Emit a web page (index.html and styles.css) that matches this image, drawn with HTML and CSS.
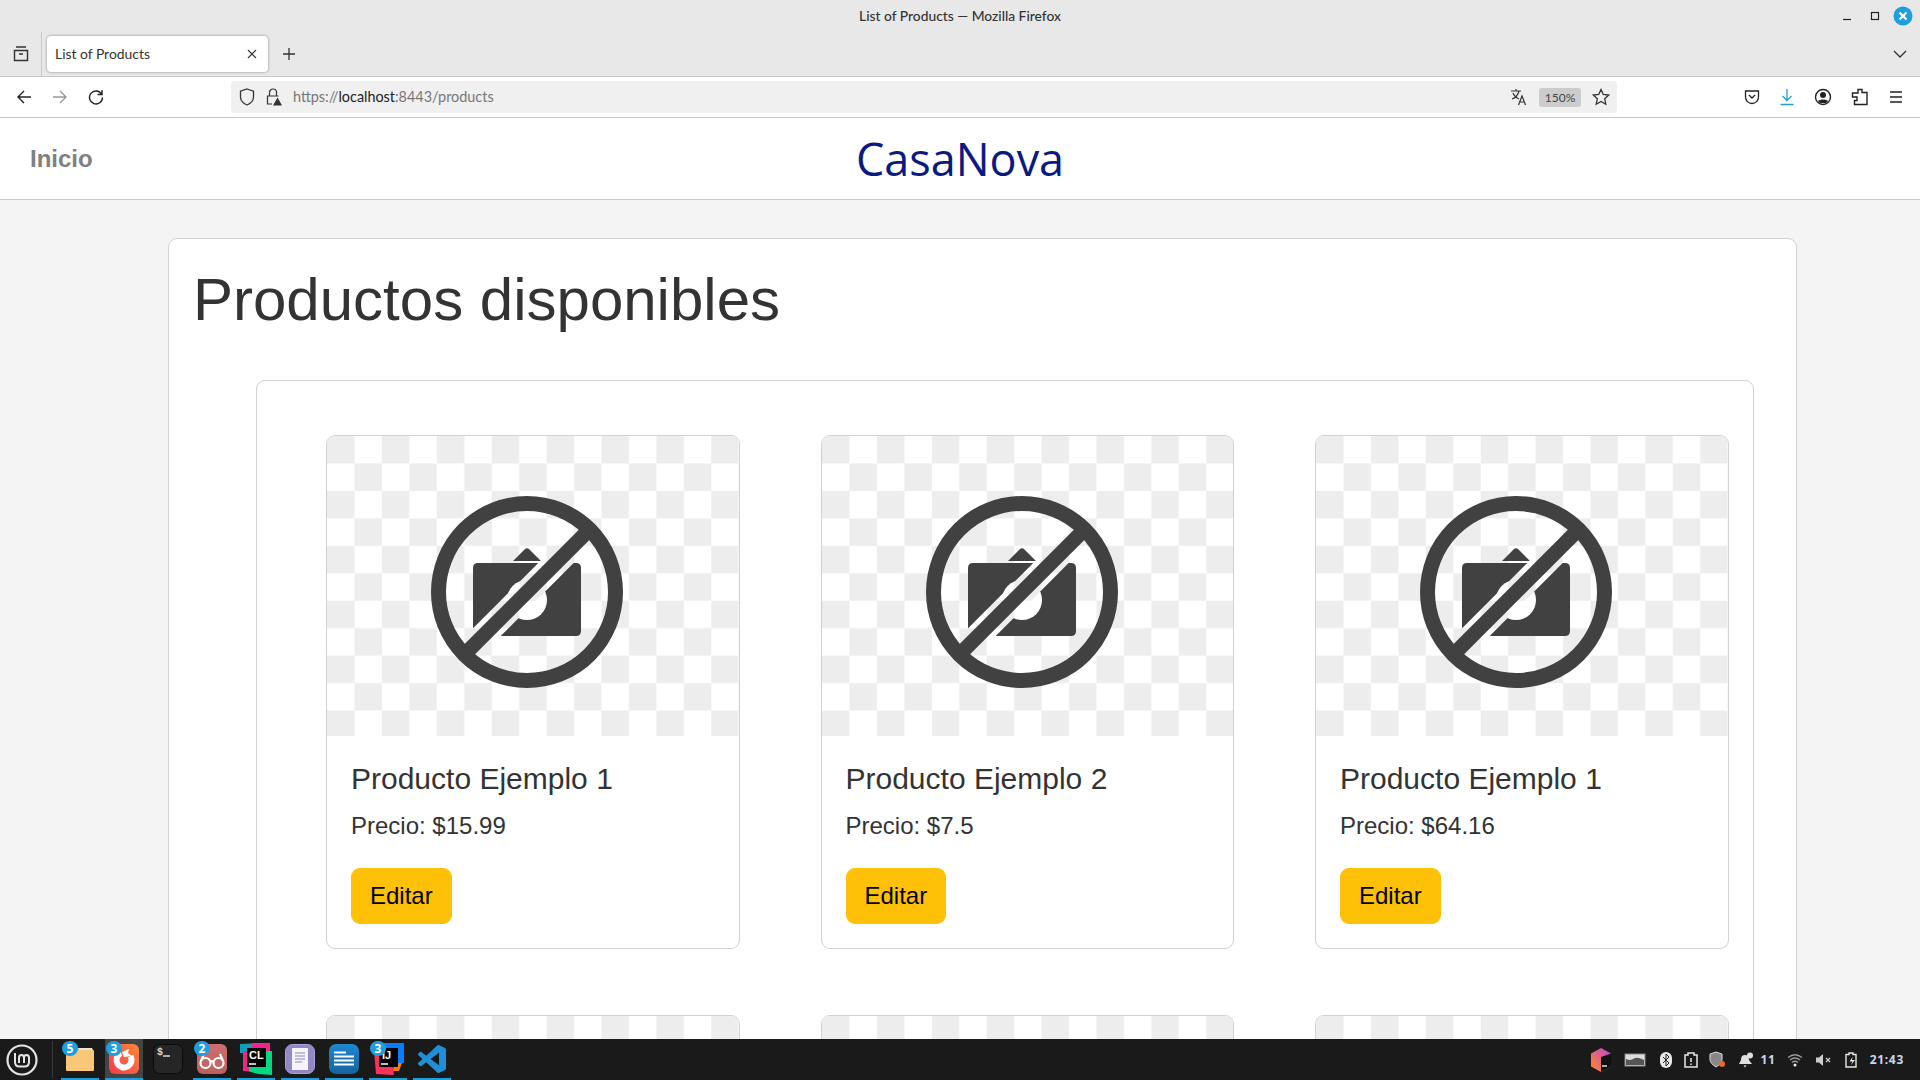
FILE: index.html
```html
<!DOCTYPE html>
<html>
<head>
    <title>List of Products</title>
    <link rel="stylesheet" href="styles.css">
</head>
<body>
    <svg class="defs" width="0" height="0">
        <defs>
            <pattern id="checker" width="54.9" height="54.9" patternUnits="userSpaceOnUse">
                <rect width="54.9" height="54.9" fill="#fff"/>
                <rect width="27.45" height="27.45" fill="#ededed"/>
                <rect x="27.45" y="27.45" width="27.45" height="27.45" fill="#ededed"/>
            </pattern>
            <mask id="cut" maskUnits="userSpaceOnUse" x="0" y="0" width="412" height="300">
                <rect width="412" height="300" fill="#fff"/>
                <line x1="130" y1="226" x2="270" y2="86" stroke="#000" stroke-width="25"/>
            </mask>
            <symbol id="noimage" viewBox="0 0 412 300">
                <rect width="412" height="300" fill="url(#checker)"/>
                <g mask="url(#cut)">
                    <path fill="#414141" d="M186 125l12-12q2-1.500 4 0l12 12zM151 127h98q5 0 5 5v63q0 5-5 5H151q-5 0-5-5v-63q0-5 5-5z"/>
                    <circle cx="200" cy="164" r="20" fill="#fff"/>
                </g>
                <circle cx="200" cy="156" r="88.500" fill="none" stroke="#414141" stroke-width="15"/>
                <line x1="137" y1="219" x2="263" y2="93" stroke="#414141" stroke-width="14.500"/>
            </symbol>
        </defs>
    </svg>

    <div class="browser">
        <div class="titlebar">
            <span class="window-title">List of Products — Mozilla Firefox</span>
            <div class="window-controls">
                <svg width="14" height="14" viewBox="0 0 14 14"><path d="M3 10.500h8" stroke="#222" stroke-width="1.200"/></svg>
                <svg width="14" height="14" viewBox="0 0 14 14"><rect x="3.500" y="3.500" width="7" height="7" fill="none" stroke="#222" stroke-width="1.200"/></svg>
                <svg width="22" height="22" viewBox="0 0 22 22"><circle cx="11" cy="11" r="9.500" fill="#1f9ede"/><path d="M7.500 7.500l7 7M14.500 7.500l-7 7" stroke="#fff" stroke-width="2.200"/></svg>
            </div>
        </div>
        <div class="tabbar">
            <span class="tab-slot">
                <svg width="18" height="18" viewBox="0 0 18 18" fill="none" stroke="#333" stroke-width="1.400"><path d="M4 2h10M2.500 5.500h13v10h-13zM7 9h4"/></svg>
            </span>
            <div class="tab">
                <span class="tab-title">List of Products</span>
                <svg width="12" height="12" viewBox="0 0 12 12"><path d="M2 2l8 8M10 2l-8 8" stroke="#333" stroke-width="1.100"/></svg>
            </div>
            <svg class="new-tab" width="14" height="14" viewBox="0 0 14 14"><path d="M7 1v12M1 7h12" stroke="#333" stroke-width="1.300"/></svg>
            <svg class="tab-list" width="16" height="16" viewBox="0 0 16 16"><path d="M2 5l6 6 6-6" fill="none" stroke="#333" stroke-width="1.300"/></svg>
        </div>
        <div class="navbar">
            <span class="nav-btn"><svg width="16" height="16" viewBox="0 0 16 16" fill="none" stroke="#222" stroke-width="1.400"><path d="M15 8H2M8 2L2 8l6 6"/></svg></span>
            <span class="nav-btn"><svg width="16" height="16" viewBox="0 0 16 16" fill="none" stroke="#999" stroke-width="1.400"><path d="M1 8h13M8 2l6 6-6 6"/></svg></span>
            <span class="nav-btn"><svg width="16" height="16" viewBox="0 0 16 16" fill="none" stroke="#222" stroke-width="1.400"><path d="M13.500 5A6.500 6.500 0 1 0 14.500 8.500M14 1v4.500H9.500"/></svg></span>
            <div class="urlbar">
                <svg class="url-shield" width="16" height="18" viewBox="0 0 16 18" fill="none" stroke="#333" stroke-width="1.300"><path d="M8 1l6.500 2.200v6C14.500 13 11 16 8 17 5 16 1.500 13 1.500 9.200v-6z"/></svg>
                <svg class="url-lock" width="16" height="18" viewBox="0 0 16 18"><path d="M3.500 8V4.500a3.500 3.500 0 0 1 7 0V8M6 16H1.500V8h11" fill="none" stroke="#333" stroke-width="1.200"/><path d="M11.500 9.500l4.500 8H7z" fill="#333"/></svg>
                <span class="url-text">https://<b>localhost</b>:8443/products</span>
                <svg class="url-translate" width="18" height="18" viewBox="0 0 18 18" fill="none" stroke="#333" stroke-width="1.200"><path d="M1 3h10M6 1v2M9 3c-1 4-4 7-7 8M3 5c1 3 4 5 6 6M8.500 17l3.500-9 3.500 9M10 14h4"/></svg>
                <span class="url-zoom">150%</span>
                <svg class="url-star" width="18" height="18" viewBox="0 0 18 18"><path d="M9 1.500l2.300 5 5.400.600-4 3.700 1.100 5.400L9 13.500l-4.800 2.700 1.100-5.400-4-3.700 5.400-.600z" fill="none" stroke="#333" stroke-width="1.300"/></svg>
            </div>
            <div class="toolbar">
                <svg width="16" height="16" viewBox="0 0 16 16" fill="none" stroke="#222" stroke-width="1.300"><path d="M1.500 2h13v6a6.500 6.500 0 0 1-13 0zM5 6l3 3 3-3"/></svg>
                <svg width="16" height="18" viewBox="0 0 16 18" fill="none" stroke="#1f9ede" stroke-width="1.300"><path d="M8 1v11M3.500 8L8 12.500 12.500 8M1.500 16.500h13"/></svg>
                <svg width="18" height="18" viewBox="0 0 18 18"><circle cx="9" cy="9" r="7.500" fill="none" stroke="#222" stroke-width="1.400"/><circle cx="9" cy="7" r="3" fill="#222"/><path d="M4 13c2-2 8-2 10 0l-2 2H6z" fill="#222"/></svg>
                <svg width="18" height="18" viewBox="0 0 18 18"><path d="M7 1.500h4v3h5v12H3.500v-4h2.500V9H1.500V5H7z" fill="none" stroke="#222" stroke-width="1.400"/></svg>
                <svg width="16" height="16" viewBox="0 0 16 16"><path d="M2 3h12M2 8h12M2 13h12" stroke="#222" stroke-width="1.300"/></svg>
            </div>
        </div>
    </div>

    <div class="page">
        <header class="site-header">
            <a class="home-link">Inicio</a>
            <span class="brand">CasaNova</span>
            <span></span>
        </header>
        <main class="panel">
            <h1>Productos disponibles</h1>
            <section class="product-box">
                <article class="card">
                    <svg class="card-img"><use href="#noimage"/></svg>
                    <div class="card-body">
                        <h5>Producto Ejemplo 1</h5>
                        <p>Precio: $15.99</p>
                        <a class="btn-edit">Editar</a>
                    </div>
                </article>
                <article class="card">
                    <svg class="card-img"><use href="#noimage"/></svg>
                    <div class="card-body">
                        <h5>Producto Ejemplo 2</h5>
                        <p>Precio: $7.5</p>
                        <a class="btn-edit">Editar</a>
                    </div>
                </article>
                <article class="card">
                    <svg class="card-img"><use href="#noimage"/></svg>
                    <div class="card-body">
                        <h5>Producto Ejemplo 1</h5>
                        <p>Precio: $64.16</p>
                        <a class="btn-edit">Editar</a>
                    </div>
                </article>
                <article class="card"><svg class="card-img"><use href="#noimage"/></svg></article>
                <article class="card"><svg class="card-img"><use href="#noimage"/></svg></article>
                <article class="card"><svg class="card-img"><use href="#noimage"/></svg></article>
            </section>
        </main>
    </div>

    <footer class="taskbar">
        <span class="menu-btn">
            <svg width="32" height="32" viewBox="0 0 32 32" fill="none" stroke="#e4e4e4"><circle cx="16" cy="16" r="14.500" stroke-width="2.200"/><path d="M9 9v9q0 4.500 4.500 4.500h5q4.500 0 4.500-4.500v-4q0-3-2.500-3t-2.500 3v5M18 14q0-3-2.500-3T13 14v5" stroke-width="2"/></svg>
        </span>
        <span class="task-sep"></span>
        <div class="task-items">
            <span class="task on">
                <i class="count">5</i>
                <svg width="30" height="26" viewBox="0 0 30 26"><path d="M1 3q0-1 1-1h10l2 2h14q1 0 1 1v19q0 1-1 1H2q-1 0-1-1z" fill="#f8c878"/><path d="M12 2h15l1 2H14z" fill="#e8e4d8"/></svg>
            </span>
            <span class="task on active">
                <i class="count">3</i>
                <svg width="30" height="30" viewBox="0 0 30 30"><defs><linearGradient id="fx" x1="0" y1="1" x2="1" y2="0"><stop offset="0" stop-color="#f5384f"/><stop offset="1" stop-color="#ff8a35"/></linearGradient></defs><rect width="30" height="30" rx="6" fill="url(#fx)"/><circle cx="15" cy="16" r="7.500" fill="none" stroke="#fff" stroke-width="6" stroke-dasharray="36 11" transform="rotate(-30 15 16)"/><path d="M13 8l7-3-1 4 4 3-8 1z" fill="#fff"/></svg>
            </span>
            <span class="task">
                <svg width="30" height="30" viewBox="0 0 30 30"><rect x=".5" y=".5" width="29" height="29" rx="6" fill="#262626" stroke="#0c0c0c"/><text x="4" y="11" class="term-text">$</text><path d="M10 12h7" stroke="#ddd" stroke-width="1.500"/></svg>
            </span>
            <span class="task on">
                <i class="count">2</i>
                <svg width="30" height="30" viewBox="0 0 30 30" fill="none" stroke="#fff" stroke-width="2.200"><defs><linearGradient id="gl" x1="0" y1="0" x2="0" y2="1"><stop offset="0" stop-color="#cf6e6e"/><stop offset="1" stop-color="#bb6060"/></linearGradient></defs><rect width="30" height="30" rx="6" fill="url(#gl)" stroke="none"/><circle cx="8.500" cy="19" r="5"/><circle cx="21.500" cy="19" r="5"/><path d="M13.500 18q1.500-1.500 3 0M4 17l3-7M26 17l-3-7"/></svg>
            </span>
            <span class="task on">
                <svg width="32" height="32" viewBox="0 0 32 32"><path d="M0 1l24-1 1 10H0z" fill="#0ea0b8"/><path d="M12 0h18v14H12z" fill="#f0258c"/><path d="M4 8h28v24l-14-1-14-4z" fill="#00d880"/><path d="M3 8h6v20H3z" fill="#f0258c"/><rect x="7" y="5" width="19" height="19" fill="#000"/><text x="9" y="16" class="ide-text">CL</text><path d="M9 21h7" stroke="#fff" stroke-width="1.500"/></svg>
            </span>
            <span class="task on">
                <svg width="30" height="30" viewBox="0 0 30 30"><rect x=".5" y=".5" width="29" height="29" rx="7" fill="#9188c6" stroke="#aaa3d8"/><rect x="7" y="4" width="16" height="22" fill="#f4f4fa"/><path d="M10 9h10M10 12h10M10 15h10M10 18h7" stroke="#8d86c4"/></svg>
            </span>
            <span class="task on">
                <svg width="30" height="30" viewBox="0 0 30 30"><defs><linearGradient id="wr" x1="0" y1="0" x2="0" y2="1"><stop offset="0" stop-color="#1e86d0"/><stop offset="1" stop-color="#14649c"/></linearGradient></defs><rect width="30" height="30" rx="7" fill="url(#wr)"/><path d="M5 8.500h12M5 12.500h20M5 16.500h20M5 20.500h20" stroke="#fff" stroke-width="1.900"/></svg>
            </span>
            <span class="task on">
                <i class="count">3</i>
                <svg width="32" height="32" viewBox="0 0 32 32"><path d="M10 0h22v20H10z" fill="#087cfa"/><path d="M2 7h16l4 25-18-1z" fill="#fe315d"/><path d="M22 20h8l-3 8h-6z" fill="#f97a12"/><rect x="7" y="5" width="19" height="19" fill="#000"/><text x="10" y="16" class="ide-text">IJ</text><path d="M9 21h7" stroke="#fff" stroke-width="1.500"/></svg>
            </span>
            <span class="task on">
                <svg width="28" height="28" viewBox="0 0 24 24"><path fill="#1f90d8" d="M23.150 2.587L18.210.21a1.494 1.494 0 0 0-1.705.29l-9.460 8.630-4.120-3.128a.999.999 0 0 0-1.276.057L.327 7.261A1 1 0 0 0 .326 8.740L3.899 12 .326 15.260a1 1 0 0 0 .001 1.479L1.650 17.940a.999.999 0 0 0 1.276.057l4.120-3.128 9.460 8.630a1.492 1.492 0 0 0 1.704.29l4.942-2.377A1.500 1.500 0 0 0 24 20.060V3.939a1.500 1.500 0 0 0-.85-1.352zm-5.146 14.861L10.826 12l7.178-5.448v10.896z"/></svg>
            </span>
        </div>
        <div class="tray">
            <svg class="tray-box" width="22" height="24" viewBox="0 0 22 24"><defs><linearGradient id="tb" x1="0" y1="1" x2="1" y2="0"><stop offset="0" stop-color="#ff8a1e"/><stop offset="1" stop-color="#c040e0"/></linearGradient></defs><path d="M11 0l10 5.500v13L11 24 1 18.500v-13z" fill="url(#tb)"/><path d="M11 9l10-3.500v13L11 24z" fill="#111"/><path d="M12 18h5" stroke="#fff" stroke-width="1.300"/></svg>
            <svg class="tray-disk" width="22" height="14" viewBox="0 0 22 14"><rect x="1" y="1" width="20" height="12" fill="#ddd" stroke="#888"/><path d="M2 6q4 2 7 0t6-1 5 2v5H2z" fill="#555"/></svg>
            <svg class="tray-bt" width="12" height="16" viewBox="0 0 12 16"><rect width="12" height="16" rx="6" fill="#e8e8e8"/><path d="M3 5l6 6-3 3V2l3 3-6 6" fill="none" stroke="#222"/></svg>
            <svg class="tray-clip" width="14" height="16" viewBox="0 0 14 16"><path d="M1 3h3V1h6v2h3v12H1zM7 6v4M7 11.500v1.500" fill="none" stroke="#e8e8e8" stroke-width="1.500"/></svg>
            <svg class="tray-shield" width="16" height="17" viewBox="0 0 16 17"><path d="M7 1l6 2v5c0 4-3 6-6 8-3-2-6-4-6-8V3z" fill="#888" stroke="#ddd"/><circle cx="13" cy="13" r="3" fill="#f0682a"/></svg>
            <svg class="tray-bell" width="16" height="16" viewBox="0 0 16 16"><path d="M7 3q4 0 4 5l3 4H1l2-4q0-5 4-5zM5.500 13.500h3L7 15.500z" fill="#e0e0e0"/><circle cx="12" cy="3.500" r="3" fill="#e0e0e0"/></svg>
            <span class="tray-text tray-count">11</span>
            <svg class="tray-wifi" width="16" height="14" viewBox="0 0 16 14" fill="none" stroke="#999" stroke-width="1.300"><path d="M1 4.500q7-5.500 14 0M3 7q5-4 10 0M5 9.500q3-2.500 6 0"/><circle cx="8" cy="12" r="1.500" fill="#eee" stroke="none"/></svg>
            <svg class="tray-mute" width="16" height="14" viewBox="0 0 16 14"><path d="M0 4.500h3L7 1v12L3 9.500H0z" fill="#ccc"/><path d="M10 5l4 4M14 5l-4 4" stroke="#ccc" stroke-width="1.300"/></svg>
            <svg class="tray-batt" width="14" height="16" viewBox="0 0 14 16"><path d="M4 1h4v1.500h3V15H1V2.500h3z" fill="none" stroke="#e8e8e8" stroke-width="1.400"/><path d="M7.500 5L4.500 9.500h3L6 13l4-5H7z" fill="#e8e8e8"/></svg>
            <span class="tray-text tray-clock">21:43</span>
        </div>
    </footer>
</body>
</html>
```

FILE: styles.css
```css
html, body {
    margin: 0;
    height: 100%;
}

body {
    width: 1920px;
    height: 1080px;
    overflow: hidden;
    display: flex;
    flex-direction: column;
    background: #f4f4f4;
    font-family: "Liberation Sans", sans-serif;
    color: #333;
}

.defs {
    position: absolute;
}

/* browser chrome */
.browser {
    background: #e8e8e8;
    font-family: "Lato", sans-serif;
    color: #333;
}

.titlebar {
    height: 32px;
    display: flex;
    align-items: center;
    justify-content: center;
    position: relative;
}

.window-title {
    margin-bottom: 2px;
    font-size: 13.800px;
    font-weight: 500;
}

.window-controls {
    position: absolute;
    right: 6px;
    top: 5px;
    display: flex;
    align-items: center;
    gap: 14px;
}

.window-controls svg:last-child {
    margin-left: -4px;
}

.tabbar {
    height: 44px;
    border-bottom: 1px solid #c8c8c8;
    display: flex;
    align-items: center;
}

.tab-slot {
    width: 42px;
    height: 44px;
    border-right: 1px solid #c8c8c8;
    display: flex;
    align-items: center;
    justify-content: center;
    box-sizing: border-box;
}

.tab {
    margin-left: 5px;
    width: 221px;
    height: 36px;
    box-sizing: border-box;
    padding: 0 10px 0 8px;
    background: #fff;
    border-radius: 4px;
    box-shadow: 0 0 3px rgba(0, 0, 0, .4);
    display: flex;
    align-items: center;
    justify-content: space-between;
    font-size: 13.900px;
}

.tab-title {
    margin-bottom: 2px;
}

.new-tab {
    margin-left: 14px;
}

.tab-list {
    margin-left: auto;
    margin-right: 12px;
}

.navbar {
    height: 40px;
    background: #fff;
    border-bottom: 1px solid #c8c8c8;
    padding-left: 6px;
    display: flex;
    align-items: center;
}

.nav-btn {
    width: 36px;
    display: flex;
    justify-content: center;
}

.urlbar {
    margin-left: 117px;
    width: 1386px;
    height: 32px;
    background: #f0f0f0;
    border-radius: 4px;
    display: flex;
    align-items: center;
    font-size: 14.400px;
    color: #777;
}

.url-shield {
    margin-left: 8px;
}

.url-lock {
    margin-left: 11px;
}

.url-text {
    margin: 0 0 2px 11px;
}

.url-text b {
    font-weight: 400;
    color: #222;
}

.url-translate {
    margin-left: auto;
}

.url-zoom {
    margin-left: 11px;
    width: 42px;
    height: 19px;
    line-height: 19px;
    text-align: center;
    font-size: 12px;
    color: #444;
    background: #ccc;
    border-radius: 3px;
}

.url-star {
    margin: 0 7px 0 11px;
}

.toolbar {
    margin-left: 127px;
    display: flex;
    align-items: center;
    gap: 19px;
}

/* site */
.page {
    flex: 1;
    overflow: hidden;
}

.site-header {
    height: 81px;
    background: #fff;
    border-bottom: 1px solid #ccc;
    padding: 0 30px;
    display: grid;
    grid-template-columns: 1fr auto 1fr;
    align-items: center;
}

.home-link {
    font-size: 24px;
    font-weight: 700;
    color: #808080;
}

.brand {
    font-family: "Open Sans", sans-serif;
    font-size: 45px;
    color: #0a1a80;
}

.panel {
    margin: 38px 0 0 168px;
    width: 1629px;
    box-sizing: border-box;
    padding: 25px 42px 0 87px;
    background: #fff;
    border: 1px solid #d2d2d2;
    border-radius: 9px;
}

h1 {
    margin: 0 0 44px -63px;
    font-size: 60px;
    line-height: 72px;
    font-weight: 400;
}

.product-box {
    padding: 54px 20px 0 69px;
    border: 1px solid #d2d2d2;
    border-radius: 9px;
    display: grid;
    grid-template-columns: repeat(3, 413.500px);
    column-gap: 81px;
    row-gap: 66px;
}

.card {
    border: 1px solid #d2d2d2;
    border-radius: 9px;
    overflow: hidden;
    background: #fff;
}

.card-img {
    display: block;
    width: 412px;
    height: 300px;
}

.card-body {
    padding: 25px 24px 24px;
}

h5 {
    margin: 0 0 11px;
    font-size: 30px;
    line-height: 36px;
    font-weight: 400;
}

.card-body p {
    margin: 0 0 24px;
    font-size: 24px;
    line-height: 36px;
}

.btn-edit {
    display: inline-block;
    padding: 9px 18px;
    border: 1px solid #ffc107;
    border-radius: 9px;
    background: #ffc107;
    color: #000;
    font-size: 24px;
    line-height: 36px;
}

/* desktop panel */
.taskbar {
    height: 41px;
    background: #1a1a1a;
    display: flex;
    align-items: center;
    flex-shrink: 0;
}

.menu-btn {
    width: 44px;
    display: flex;
    justify-content: center;
}

.task-sep {
    width: 1px;
    height: 37px;
    margin-left: 8px;
    background: #3a3a3a;
}

.task-items {
    margin-left: 8px;
    display: flex;
    gap: 6px;
}

.task {
    position: relative;
    width: 38px;
    height: 41px;
    box-sizing: border-box;
    display: flex;
    align-items: center;
    justify-content: center;
    border-bottom: 2px solid transparent;
}

.task.on {
    border-bottom-color: #1f9ede;
}

.task.active {
    background: #444;
}

.count {
    position: absolute;
    left: 1px;
    top: 2px;
    width: 16px;
    height: 15px;
    border-radius: 8px;
    background: #1f9ede;
    color: #fff;
    font: 700 12px/15px "Noto Sans", sans-serif;
    text-align: center;
    z-index: 1;
}

.term-text {
    font: 700 10px "Liberation Mono", monospace;
    fill: #ddd;
}

.ide-text {
    font: 700 11px "Liberation Sans", sans-serif;
    fill: #fff;
}

.tray {
    margin-left: auto;
    margin-right: 16px;
    display: flex;
    align-items: center;
}

.tray-text {
    font: 700 12px "Noto Sans", sans-serif;
    letter-spacing: .7px;
    color: #c9d9e8;
}

.tray-disk { margin-left: 12px; }
.tray-bt { margin-left: 14px; }
.tray-clip { margin-left: 12px; }
.tray-shield { margin-left: 11px; }
.tray-bell { margin-left: 13px; }
.tray-count { margin-left: 7px; }
.tray-wifi { margin-left: 11px; }
.tray-mute { margin-left: 13px; }
.tray-batt { margin-left: 13px; }
.tray-clock { margin-left: 11px; }
```
